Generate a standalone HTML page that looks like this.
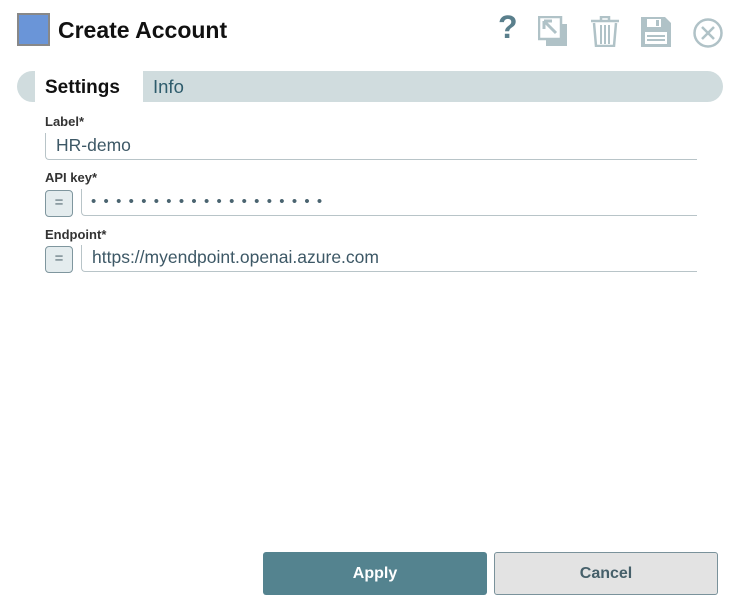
<!DOCTYPE html>
<html><head><style>
body{margin:0;width:741px;height:616px;background:#fff;font-family:"Liberation Sans",sans-serif;position:relative;overflow:hidden}
.a{position:absolute}
.lbl{position:absolute;left:45px;font-size:13px;font-weight:bold;color:#333}
.inp{position:absolute;border-left:1px solid #b8c4c8;border-bottom:1px solid #b8c4c8;border-bottom-left-radius:4px;right:44px;height:27px;font-size:17.5px;color:#3d5866;line-height:25px;padding-left:10px;box-sizing:border-box}
.eq{position:absolute;left:45px;width:28px;height:27px;border:1px solid #7f969e;border-radius:4px;background:#e4ecee;box-sizing:border-box;text-align:center;color:#5a6e76;font-size:15px;line-height:24px}
</style></head><body>
<div class="a" style="left:17px;top:13px;width:33px;height:33px;background:#6a95d8;border:2px solid #888;box-sizing:border-box"></div>
<div class="a" style="left:58px;top:17px;font-size:23px;font-weight:bold;color:#111">Create Account</div>
<div class="a" style="left:498px;top:9px;font-size:32px;font-weight:bold;color:#5a7f8c">?</div>
<svg class="a" style="left:538px;top:16px" width="32" height="32" viewBox="0 0 32 32"><rect x="1" y="1" width="22" height="22" fill="none" stroke="#b0c2c7" stroke-width="2.5"/><path d="M24 8v16H8v6h21V8z" fill="#b0c2c7"/><path d="M6 5l12 12M6 5v8M6 5h8" stroke="#b0c2c7" stroke-width="3" fill="none"/></svg>
<svg class="a" style="left:590px;top:16px" width="30" height="31" viewBox="0 0 30 31"><path d="M1 5h28M11 5V1h8v4M4 7l2 23h18l2-23" fill="none" stroke="#b0c2c7" stroke-width="2.5"/><path d="M11 9v19M15 9v19M19 9v19" stroke="#b0c2c7" stroke-width="2"/></svg>
<svg class="a" style="left:640px;top:16px" width="32" height="32" viewBox="0 0 32 32"><path d="M1 1h24l6 6v24H1z" fill="#b0c2c7"/><rect x="7" y="3" width="14" height="8" fill="#fff"/><rect x="16" y="4" width="3" height="6" fill="#b0c2c7"/><rect x="5" y="16" width="22" height="12" fill="#fff"/><path d="M7 20h18M7 24h18" stroke="#b0c2c7" stroke-width="2"/></svg>
<svg class="a" style="left:692px;top:17px" width="32" height="32" viewBox="0 0 32 32"><circle cx="16" cy="16" r="13.5" fill="none" stroke="#b0c2c7" stroke-width="2.5"/><path d="M10 10l12 12M22 10L10 22" stroke="#b0c2c7" stroke-width="2.5"/></svg>
<div class="a" style="left:17px;top:71px;width:706px;height:31px;background:#d0dcde;border-radius:16px"></div>
<div class="a" style="left:35px;top:71px;width:108px;height:31px;background:#fff;font-size:19px;font-weight:bold;line-height:34px;padding-left:10px;box-sizing:border-box;color:#111">Settings</div>
<div class="a" style="left:153px;top:71px;font-size:18.5px;line-height:32px;color:#2e5c6c">Info</div>
<div class="lbl" style="top:114px">Label*</div>
<div class="inp" style="left:45px;top:133px">HR-demo</div>
<div class="lbl" style="top:170px">API key*</div>
<div class="eq" style="top:190px">=</div>
<div class="inp" style="left:81px;top:189px;font-size:15px;letter-spacing:7.3px;padding-left:9px;color:#4a6470">&#8226;&#8226;&#8226;&#8226;&#8226;&#8226;&#8226;&#8226;&#8226;&#8226;&#8226;&#8226;&#8226;&#8226;&#8226;&#8226;&#8226;&#8226;&#8226;</div>
<div class="lbl" style="top:227px">Endpoint*</div>
<div class="eq" style="top:246px">=</div>
<div class="inp" style="left:81px;top:245px">https://myendpoint.openai.azure.com</div>
<div class="a" style="left:263px;top:552px;width:224px;height:43px;background:#54838f;border-radius:3px;color:#fff;font-weight:bold;font-size:16px;text-align:center;line-height:43px">Apply</div>
<div class="a" style="left:494px;top:552px;width:224px;height:43px;background:#e3e3e3;border:1px solid #7a929b;border-radius:3px;box-sizing:border-box;color:#46606a;font-weight:bold;font-size:16px;text-align:center;line-height:41px">Cancel</div>
</body></html>
